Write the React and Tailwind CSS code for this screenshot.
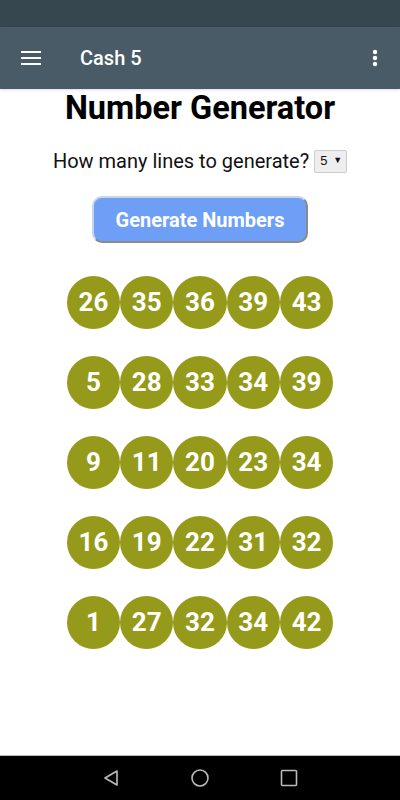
import { useState } from "react";

const lines = [
  [26, 35, 36, 39, 43],
  [5, 28, 33, 34, 39],
  [9, 11, 20, 23, 34],
  [16, 19, 22, 31, 32],
  [1, 27, 32, 34, 42],
];

export default function App() {
  const [count, setCount] = useState("5");

  return (
    <div className="w-[400px] h-[800px] flex flex-col bg-white overflow-hidden" style={{ fontFamily: "Roboto, 'Noto Sans', sans-serif" }}>
      <div className="h-[27px] bg-[#37474f] shrink-0" />
      <div className="h-[62px] bg-[#485b66] flex items-center shrink-0 shadow">
        <svg width="20" height="14" viewBox="0 0 20 14" className="ml-[21px]">
          <rect x="0" y="0" width="20" height="2" fill="#fff" />
          <rect x="0" y="6" width="20" height="2" fill="#fff" />
          <rect x="0" y="12" width="20" height="2" fill="#fff" />
        </svg>
        <span className="ml-[39px] text-white text-[20px] font-medium">Cash 5</span>
        <svg width="6" height="18" viewBox="0 0 6 18" className="ml-auto mr-[22px]">
          <circle cx="3" cy="3" r="2.2" fill="#fff" />
          <circle cx="3" cy="9" r="2.2" fill="#fff" />
          <circle cx="3" cy="15" r="2.2" fill="#fff" />
        </svg>
      </div>

      <div className="flex-1 flex flex-col items-center">
        <h1 className="mt-[1px] text-[32.5px] leading-[36px] font-bold text-black">Number Generator</h1>
        <div className="mt-[20px] mr-[5px] flex items-center text-[20px] text-[#111]">
          <span>How many lines to generate?</span>
          <select
            value={count}
            onChange={(e) => setCount(e.target.value)}
            className="ml-[5px] h-[23px] w-[33px] text-[13px] border border-[#ccc] bg-[#eee] rounded-[2px] pl-[5px] appearance-none"
            style={{ fontFamily: "'Liberation Sans', sans-serif" }}
          >
            {[1, 2, 3, 4, 5].map((n) => (
              <option key={n} value={n}>{n}</option>
            ))}
          </select>
          <span className="-ml-[14px] text-[9px] pointer-events-none">▼</span>
        </div>
        <button className="mt-[20px] w-[216px] h-[47px] rounded-[10px] bg-[#6d9ff6] text-white text-[20px] font-bold border-2 border-t-[#c8d4e8] border-l-[#c8d4e8] border-r-[#8a8a8a] border-b-[#8a8a8a]">
          Generate Numbers
        </button>

        <div className="mt-[33px] flex flex-col gap-[27px]">
          {lines.map((line, i) => (
            <div key={i} className="flex">
              {line.map((n, j) => (
                <div key={j} className="w-[53.3px] h-[53px] rounded-full bg-[#959a1a] flex items-center justify-center text-white text-[26px] font-bold">
                  {n}
                </div>
              ))}
            </div>
          ))}
        </div>
      </div>

      <div className="h-[45px] bg-black border-t border-[#bbb] flex items-center justify-center shrink-0">
        <div className="flex items-center gap-[71px]">
          <svg width="18" height="18" viewBox="0 0 18 18">
            <path d="M15 2 L3 9 L15 16 Z" fill="none" stroke="#bbb" strokeWidth="1.6" strokeLinejoin="round" />
          </svg>
          <svg width="18" height="18" viewBox="0 0 18 18">
            <circle cx="9" cy="9" r="8" fill="none" stroke="#bbb" strokeWidth="1.6" />
          </svg>
          <svg width="18" height="18" viewBox="0 0 18 18">
            <rect x="1.5" y="1.5" width="15" height="15" rx="1" fill="none" stroke="#bbb" strokeWidth="1.6" />
          </svg>
        </div>
      </div>
    </div>
  );
}
